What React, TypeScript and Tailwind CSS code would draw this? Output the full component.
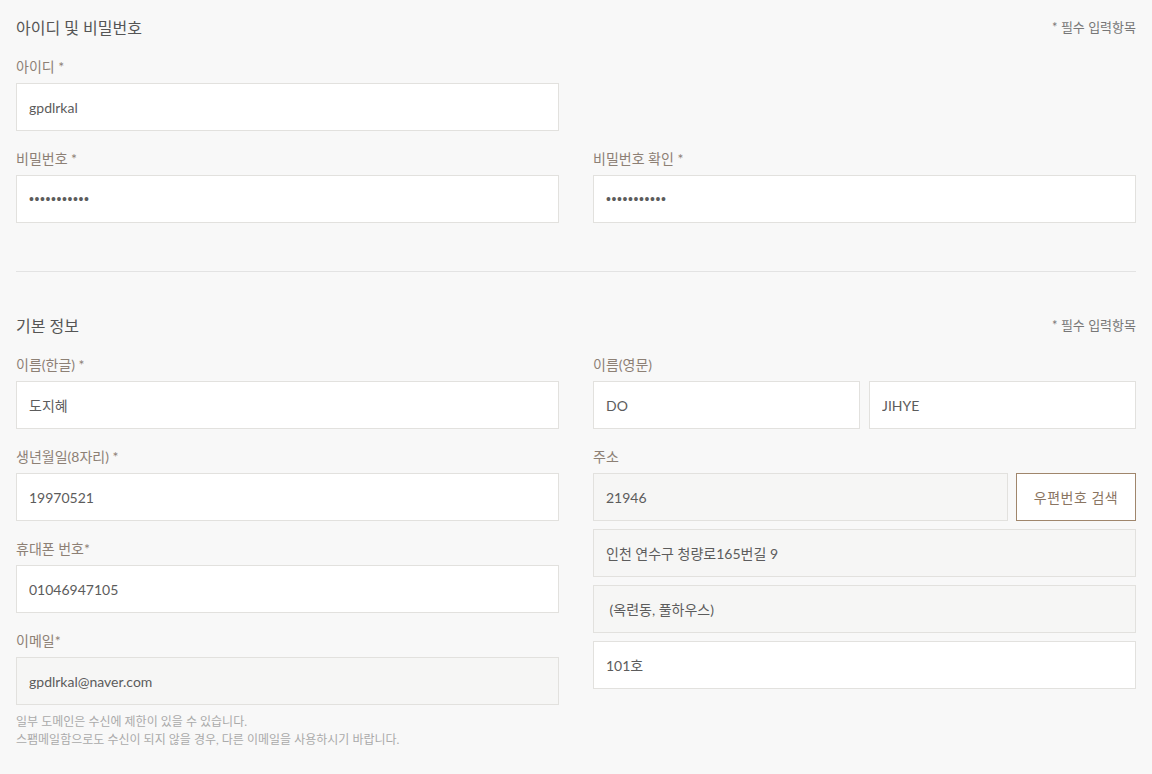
import type { ReactNode } from 'react';

const font = { fontFamily: 'Lato, "Noto Sans CJK KR", sans-serif' };
const dotFont = { fontFamily: '"Liberation Sans", sans-serif' };

const Label = ({ children }: { children: ReactNode }) => (
  <p className="mb-[6px] h-[20px] text-[14px] leading-[20px] text-[#8d8075]">{children}</p>
);

const Input = ({
  value,
  readOnly,
  password,
  className = '',
}: {
  value: string;
  readOnly?: boolean;
  password?: boolean;
  className?: string;
}) => (
  <input
    type={password ? 'password' : 'text'}
    defaultValue={value}
    readOnly={readOnly}
    className={`h-[48px] w-full border border-[#e2e1de] px-3 text-[14px] text-[#5c5c5c] outline-none ${
      readOnly ? 'bg-[#f6f6f5]' : 'bg-white'
    } ${password ? 'tracking-[0.6px]' : ''} ${className}`}
    style={password ? dotFont : font}
  />
);

const SectionHead = ({ title }: { title: string }) => (
  <div className="mb-[17px] flex h-[24px] items-center justify-between">
    <h2 className="text-[16px] text-[#555]">{title}</h2>
    <span className="text-[13px] text-[#777]">* 필수 입력항목</span>
  </div>
);

export default function App() {
  return (
    <div className="min-h-[774px] bg-[#f8f8f8] px-4 pt-4" style={font}>
      <section>
        <SectionHead title="아이디 및 비밀번호" />
        <div className="grid grid-cols-2 gap-x-[34px] gap-y-[18px]">
          <div>
            <Label>아이디 *</Label>
            <Input value="gpdlrkal" />
          </div>
          <div />
          <div>
            <Label>비밀번호 *</Label>
            <Input value="gpdlrkal123" password />
          </div>
          <div>
            <Label>비밀번호 확인 *</Label>
            <Input value="gpdlrkal123" password />
          </div>
        </div>
      </section>

      <hr className="mt-[48px] mb-[42px] border-t border-[#e3e3e3]" />

      <section>
        <SectionHead title="기본 정보" />
        <div className="grid grid-cols-2 gap-x-[34px]">
          <div className="flex flex-col gap-[18px]">
            <div>
              <Label>이름(한글) *</Label>
              <Input value="도지혜" />
            </div>
            <div>
              <Label>생년월일(8자리) *</Label>
              <Input value="19970521" />
            </div>
            <div>
              <Label>휴대폰 번호*</Label>
              <Input value="01046947105" />
            </div>
            <div>
              <Label>이메일*</Label>
              <Input value="gpdlrkal@naver.com" readOnly />
              <p className="mt-[8px] text-[12px] leading-[18px] text-[#aaa]">
                일부 도메인은 수신에 제한이 있을 수 있습니다.
                <br />
                스팸메일함으로도 수신이 되지 않을 경우, 다른 이메일을 사용하시기 바랍니다.
              </p>
            </div>
          </div>

          <div className="flex flex-col gap-[18px]">
            <div>
              <Label>이름(영문)</Label>
              <div className="flex gap-[9px]">
                <Input value="DO" />
                <Input value="JIHYE" />
              </div>
            </div>
            <div>
              <Label>주소</Label>
              <div className="flex flex-col gap-[8px]">
                <div className="flex gap-[8px]">
                  <Input value="21946" readOnly />
                  <button className="h-[48px] w-[120px] shrink-0 border border-[#a0866c] bg-white text-[14px] tracking-[0.5px] text-[#8a7562]">
                    우편번호 검색
                  </button>
                </div>
                <Input value="인천 연수구 청량로165번길 9" readOnly />
                <Input value=" (옥련동, 풀하우스)" readOnly />
                <Input value="101호" />
              </div>
            </div>
          </div>
        </div>
      </section>
    </div>
  );
}
